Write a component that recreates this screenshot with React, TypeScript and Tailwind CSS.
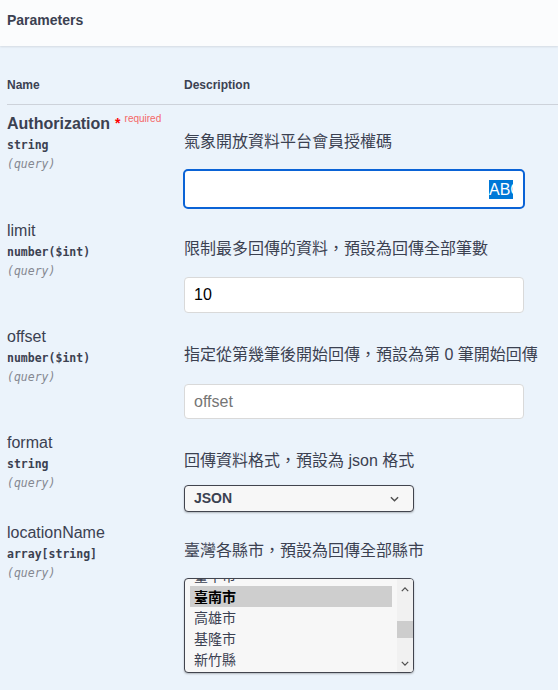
import React from "react";

const sans = "font-['Liberation_Sans','Arial',sans-serif]";
const cjk = "font-['Liberation_Sans','Noto_Sans_CJK_TC',sans-serif]";
const mono = "font-['DejaVu_Sans_Mono','Liberation_Mono',monospace]";

interface ParamRowProps {
  name: string;
  required?: boolean;
  type: string;
  description: string;
  rowClass: string;
  controlClass: string;
  children: React.ReactNode;
}

const ParamRow: React.FC<ParamRowProps> = ({
  name,
  required,
  type,
  description,
  rowClass,
  controlClass,
  children,
}) => {
  return (
    <div className={`grid grid-cols-[177px_1fr] pl-[7px] ${rowClass}`}>
      <div className="flex flex-col">
        <div className={`flex items-start text-[16px] leading-[18px] text-[#3b4151] ${sans} ${required ? "font-bold" : ""}`}>
          <span>{name}</span>
          {required && (
            <>
              <span className="ml-[5px] text-[14px] leading-[16px] text-[#ff0000]">*</span>
              <span className="ml-[4px] -mt-[2px] text-[10px] leading-[12px] font-normal text-[#f46767]">
                required
              </span>
            </>
          )}
        </div>
        <span className={`mt-[5px] text-[11.5px] leading-[14px] font-semibold text-[#3b4151] ${mono}`}>
          {type}
        </span>
        <span className={`mt-[5px] text-[11.5px] leading-[14px] italic text-[#858891] ${mono}`}>
          (query)
        </span>
      </div>
      <div className="flex flex-col">
        <p className={`mt-[17px] text-[16px] leading-[20px] text-[#3b4151] whitespace-nowrap ${cjk}`}>
          {description}
        </p>
        <div className={controlClass}>{children}</div>
      </div>
    </div>
  );
};

const Chevron: React.FC<{ dir: "up" | "down"; className?: string }> = ({ dir, className }) => (
  <svg viewBox="0 0 10 6" className={className} fill="none" stroke="#505050" strokeWidth="1.6">
    {dir === "down" ? <polyline points="1,1 5,5 9,1" /> : <polyline points="1,5 5,1 9,5" />}
  </svg>
);

export default function App() {
  const cities = ["臺中市", "臺南市", "高雄市", "基隆市", "新竹縣"];
  return (
    <div className={`w-[558px] min-h-[690px] bg-[#ebf3fb] overflow-hidden ${sans}`}>
      <div className="h-[46px] bg-[#fbfcfd] shadow-[0_1px_2px_rgba(0,0,0,0.1)] pl-[7px] pt-[12px]">
        <h4 className="text-[14px] leading-[16px] font-bold text-[#3b4151]">Parameters</h4>
      </div>

      <div className="ml-[7px] pt-[32px] pb-[12px] border-b border-[#cdd2da] grid grid-cols-[177px_1fr] text-[12px] leading-[14px] font-bold text-[#3b4151]">
        <span>Name</span>
        <span>Description</span>
      </div>

      <ParamRow
        name="Authorization"
        required
        type="string"
        description="氣象開放資料平台會員授權碼"
        rowClass="pt-[10px] pb-[4px]"
        controlClass="mt-[17px]"
      >
        <div className="-ml-[1px] w-[342px] h-[40px] rounded-[5px] border-2 border-[#0a63d6] bg-white flex items-center justify-end pr-[10px]">
          <span className="w-[24px] overflow-hidden whitespace-nowrap bg-[#0078d7] text-white text-[16px] leading-[19px]">
            ABC
          </span>
        </div>
      </ParamRow>

      <ParamRow
        name="limit"
        type="number($int)"
        description="限制最多回傳的資料，預設為回傳全部筆數"
        rowClass="pt-[9px] pb-[6px]"
        controlClass="mt-[18px]"
      >
        <div className="w-[340px] h-[36px] rounded-[4px] border border-[#d9d9d9] bg-white flex items-center pl-[9px] text-[16px] text-black">
          10
        </div>
      </ParamRow>

      <ParamRow
        name="offset"
        type="number($int)"
        description="指定從第幾筆後開始回傳，預設為第 0 筆開始回傳"
        rowClass="pt-[9px] pb-[6px]"
        controlClass="mt-[19px]"
      >
        <div className="w-[340px] h-[35px] rounded-[4px] border border-[#d9d9d9] bg-white flex items-center pl-[9px] text-[16px] text-[#757575]">
          offset
        </div>
      </ParamRow>

      <ParamRow
        name="format"
        type="string"
        description="回傳資料格式，預設為 json 格式"
        rowClass="pt-[9px] pb-[3px]"
        controlClass="mt-[14px]"
      >
        <div className="w-[230px] h-[27px] rounded-[4px] border border-[#41444e] bg-[#f7f7f7] shadow-[0_1px_2px_rgba(0,0,0,0.25)] flex items-center justify-between pl-[9px] pr-[14px]">
          <span className="text-[14px] font-bold text-[#3b4151]">JSON</span>
          <Chevron dir="down" className="w-[9px] h-[6px]" />
        </div>
      </ParamRow>

      <ParamRow
        name="locationName"
        type="array[string]"
        description="臺灣各縣市，預設為回傳全部縣市"
        rowClass="pt-[9px] pb-[6px]"
        controlClass="mt-[17px]"
      >
        <div className="w-[230px] h-[95px] rounded-[4px] border border-[#41444e] bg-[#f7f7f7] shadow-[0_1px_2px_rgba(0,0,0,0.25)] flex overflow-hidden">
          <div className="flex-1 overflow-hidden pl-[5px] pr-[5px]">
            <div className="-mt-[14px] flex flex-col">
              {cities.map((c, i) => (
                <div
                  key={c}
                  className={`h-[21px] pl-[4px] flex items-center text-[14px] leading-[16px] ${cjk} ${
                    i === 1 ? "bg-[#cecece] text-black font-bold" : "text-[#3b4151]"
                  }`}
                >
                  {c}
                </div>
              ))}
            </div>
          </div>
          <div className="w-[16px] bg-[#f1f1f1] flex flex-col items-center">
            <div className="h-[16px] flex items-center justify-center mt-[2px]">
              <Chevron dir="up" className="w-[8px] h-[5px]" />
            </div>
            <div className="mt-[24px] w-full h-[17px] bg-[#cdcdcd]" />
            <div className="mt-auto h-[16px] flex items-center justify-center mb-[1px]">
              <Chevron dir="down" className="w-[8px] h-[5px]" />
            </div>
          </div>
        </div>
      </ParamRow>
    </div>
  );
}
